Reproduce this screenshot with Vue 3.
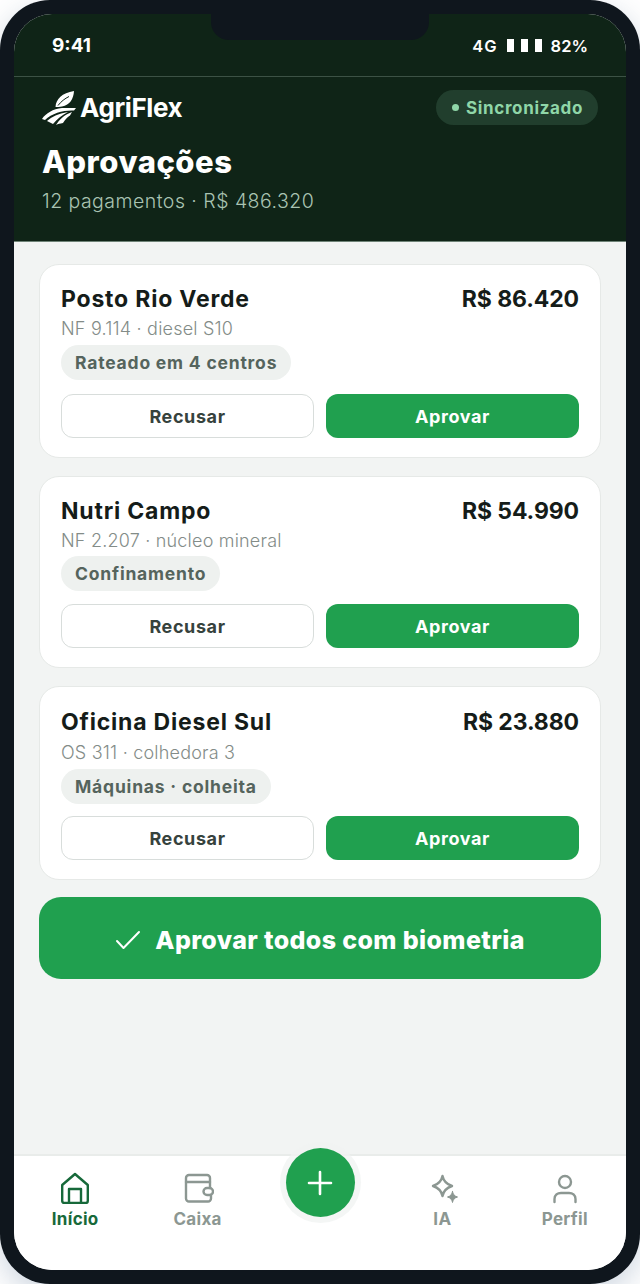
<template>
  <div class="page">
    <div class="phone">
      <div class="screen">
        <header class="head">
          <div class="status">
            <span class="time">9:41</span>
            <div class="status-right">
              <span class="net">4G</span>
              <span class="bars"><i></i><i></i><i></i></span>
              <span>82%</span>
            </div>
          </div>
          <div class="brand-row">
            <div class="brand">
              <svg class="logo" viewBox="0 0 34 36" fill="#fff">
                <path d="M13.500 17C14 9 20 3 32 1C31.500 9 28 15 20 16.500C17.500 17 15.500 17 13.500 17Z" />
                <path d="M16 15.500C19 11.500 23 8.500 27 6.500" fill="none" stroke="#0f2417" stroke-width="1" />
                <path d="M0 29C4 23 11 19 20 18H34L32 20.500C22 20 10 23 3 30Z" />
                <path d="M5 31C10 27 16 23.500 26 22C20 25 15 29 11 34C9 33 7 32 5 31Z" />
                <path d="M14 35C17 30 22 25 30 22L28 25.500C25 27 23 30 21 33C18 33.500 16 34 14 35Z" />
              </svg>
              <span class="brand-name">AgriFlex</span>
            </div>
            <div class="sync"><i></i>Sincronizado</div>
          </div>
          <h1>Aprovações</h1>
          <p class="summary">12 pagamentos · R$ 486.320</p>
        </header>

        <main class="content">
          <section v-for="item in items" :key="item.name" class="card">
            <div class="card-top">
              <h2>{{ item.name }}</h2>
              <span class="amount">{{ item.amount }}</span>
            </div>
            <p class="doc">{{ item.doc }}</p>
            <span class="tag">{{ item.tag }}</span>
            <div class="actions">
              <button class="btn refuse">Recusar</button>
              <button class="btn approve">Aprovar</button>
            </div>
          </section>

          <button class="approve-all">
            <svg width="26" height="26" viewBox="0 0 26 26" fill="none" stroke="#fff" stroke-width="2" stroke-linecap="round" stroke-linejoin="round">
              <path d="M2 14L8.500 21L24 5" />
            </svg>
            Aprovar todos com biometria
          </button>
        </main>

        <nav class="tabs">
          <div v-for="tab in tabs" :key="tab.label" class="tab" :class="{ active: tab.active }">
            <svg v-if="tab.icon" width="32" height="32" viewBox="0 0 32 32" fill="none" stroke="currentColor" stroke-width="2.400" stroke-linecap="round" stroke-linejoin="round" v-html="tab.icon"></svg>
            <span>{{ tab.label }}</span>
          </div>
          <button class="fab" aria-label="Novo">
            <svg width="30" height="30" viewBox="0 0 30 30" stroke="#fff" stroke-width="2.600" stroke-linecap="round">
              <path d="M15 4V26M4 15H26" />
            </svg>
          </button>
        </nav>
      </div>
      <div class="notch"></div>
    </div>
  </div>
</template>

<script setup>
const items = [
  { name: 'Posto Rio Verde', amount: 'R$ 86.420', doc: 'NF 9.114 · diesel S10', tag: 'Rateado em 4 centros' },
  { name: 'Nutri Campo', amount: 'R$ 54.990', doc: 'NF 2.207 · núcleo mineral', tag: 'Confinamento' },
  { name: 'Oficina Diesel Sul', amount: 'R$ 23.880', doc: 'OS 311 · colhedora 3', tag: 'Máquinas · colheita' }
]

const tabs = [
  { label: 'Início', active: true, icon: '<path d="M16 2L28.800 13V29A2 2 0 0 1 26.800 31H5.200A2 2 0 0 1 3.200 29V13Z"/><path d="M10 31V17H22V31"/>' },
  { label: 'Caixa', icon: '<path d="M28 16V6A3 3 0 0 0 25 3H7A3 3 0 0 0 4 6V26.500A3 3 0 0 0 7 29.500H26A3 3 0 0 0 29 26.500V23"/><path d="M4 10H28"/><rect x="21.500" y="16" width="9.500" height="7" rx="3.500"/>' },
  { label: '', icon: '' },
  { label: 'IA', icon: '<path d="M16.500 4C17.500 9 20 12 26 14C20 16 17.500 19 16.500 24C15.500 19 13 16 7 14C13 12 15.500 9 16.500 4Z"/><path d="M26.500 19.500C27 22 28 24 31.500 25C28 26 27 28 26.500 30.500C26 28 25 26 21.500 25C25 24 26 22 26.500 19.500Z" fill="currentColor" stroke-width="1"/>' },
  { label: 'Perfil', icon: '<circle cx="16" cy="10" r="6"/><path d="M5.500 30V27C5.500 23 8.500 21 12 21H20C23.500 21 26.500 23 26.500 27V30"/>' }
]
</script>

<style>
html, body {
  margin: 0;
  background: #fff;
}
</style>

<style scoped>
.page {
  width: 640px;
  height: 1284px;
  font-family: "Inter", "Noto Sans", sans-serif;
  overflow: hidden;
}

.phone {
  position: relative;
  box-sizing: border-box;
  width: 640px;
  height: 1284px;
  padding: 14px;
  background: #0f161d;
  border-radius: 50px;
  box-shadow: 0 10px 30px rgba(60, 90, 130, .25);
}

.notch {
  position: absolute;
  top: 0;
  left: 211px;
  width: 218px;
  height: 40px;
  background: #0f161d;
  border-radius: 0 0 18px 18px;
}

.screen {
  display: flex;
  flex-direction: column;
  height: 100%;
  background: #f2f4f3;
  border-radius: 38px;
  overflow: hidden;
}

.head {
  height: 228px;
  box-sizing: border-box;
  flex: none;
  background: #0f2417;
  border-bottom: 1px solid #6f8377;
  color: #fff;
}

.status {
  display: flex;
  justify-content: space-between;
  align-items: center;
  height: 63px;
  box-sizing: border-box;
  padding: 1px 38px 0;
  border-bottom: 1px solid #3c5245;
  font-weight: 600;
  font-size: 16.500px;
}

.time {
  font-size: 19px;
  font-weight: 700;
}

.status-right {
  display: flex;
  align-items: center;
  gap: 9px;
}

.net {
  letter-spacing: 1px;
}

.bars {
  display: flex;
  gap: 7px;
}

.bars i {
  width: 7px;
  height: 13px;
  background: #fff;
}

.brand-row {
  display: flex;
  justify-content: space-between;
  align-items: center;
  height: 36px;
  padding: 13px 28px 0;
}

.brand {
  display: flex;
  align-items: center;
  gap: 4px;
}

.logo {
  width: 34px;
  height: 36px;
}

.brand-name {
  padding-bottom: 2px;
  font-size: 26px;
  font-weight: 700;
  letter-spacing: -.4px;
}

.sync {
  display: flex;
  align-items: center;
  gap: 7px;
  height: 35px;
  margin-bottom: 1px;
  padding: 0 15px 0 16px;
  border-radius: 18px;
  background: #213e2d;
  color: #8fd6a8;
  font-size: 17px;
  font-weight: 700;
  letter-spacing: .65px;
}

.sync i {
  width: 7px;
  height: 7px;
  border-radius: 50%;
  background: #8fd6a8;
}

h1 {
  margin: 17px 28px 0;
  font-size: 31px;
  line-height: 38px;
  font-weight: 800;
  letter-spacing: .5px;
}

.summary {
  margin: 8px 28px 0;
  font-size: 19.500px;
  line-height: 24px;
  font-weight: 300;
  letter-spacing: .47px;
  color: #a9c3b2;
}

.content {
  flex: 1;
  display: flex;
  flex-direction: column;
  gap: 18px;
  padding: 22px 25px 0 25px;
}

.card {
  display: flex;
  flex-direction: column;
  align-items: flex-start;
  box-sizing: border-box;
  height: 194px;
  padding: 20px 21px 0;
  background: #fff;
  border: 1px solid #e6e9e7;
  border-radius: 20px;
}

.card:nth-of-type(2) {
  height: 192px;
}

.card:nth-of-type(2) .tag {
  margin-top: 4px;
}

.card:nth-of-type(2) .actions {
  margin-top: 13px;
}

.card:nth-of-type(3) {
  padding-top: 21px;
}

.card:nth-of-type(3) .doc {
  margin-top: 6px;
}

.card:nth-of-type(3) .actions {
  margin-top: 12px;
}

.card-top {
  display: flex;
  justify-content: space-between;
  align-items: center;
  width: 100%;
  color: #151c19;
}

h2 {
  margin: 0;
  font-size: 23px;
  line-height: 28px;
  font-weight: 700;
  letter-spacing: .8px;
}

.amount {
  font-size: 23px;
  font-weight: 700;
  letter-spacing: -.1px;
}

.doc {
  margin: 5px 0 0;
  font-size: 18px;
  line-height: 22px;
  font-weight: 300;
  letter-spacing: .2px;
  color: #838c88;
}

.tag {
  margin-top: 5px;
  height: 35px;
  line-height: 35px;
  padding: 0 14px;
  border-radius: 18px;
  background: #eef1ef;
  color: #55645d;
  font-size: 17.500px;
  font-weight: 700;
  letter-spacing: .8px;
}

.actions {
  display: grid;
  grid-template-columns: 1fr 1fr;
  gap: 12px;
  width: 100%;
  margin-top: 14px;
}

.btn {
  height: 44px;
  box-sizing: border-box;
  border-radius: 12px;
  font: 700 18px "Inter", sans-serif;
  letter-spacing: .6px;
}

.refuse {
  background: #fff;
  border: 1px solid #d8dddb;
  color: #36423d;
}

.approve {
  background: #20a04f;
  border: 0;
  color: #fff;
}

.approve-all {
  display: flex;
  align-items: center;
  justify-content: center;
  gap: 14px;
  height: 82px;
  margin-top: -1px;
  padding: 3px 0 0;
  border: 0;
  border-radius: 22px;
  background: #20a04f;
  color: #fff;
  font: 800 25px "Inter", sans-serif;
  letter-spacing: .37px;
}

.tabs {
  position: relative;
  display: grid;
  grid-template-columns: repeat(5, 1fr);
  flex: none;
  height: 116px;
  box-sizing: border-box;
  background: #fff;
  border-top: 2px solid #e9ecea;
}

.tab {
  display: flex;
  flex-direction: column;
  align-items: center;
  padding-top: 16px;
  gap: 5px;
  color: #8c9792;
  font-size: 17px;
  line-height: 20px;
  font-weight: 700;
  letter-spacing: .3px;
}

.tab.active {
  color: #17693a;
}

.fab {
  position: absolute;
  top: -8px;
  left: 50%;
  display: flex;
  align-items: center;
  justify-content: center;
  width: 69px;
  height: 69px;
  margin-left: -34.500px;
  padding: 0;
  border: 0;
  border-radius: 50%;
  background: #20a04f;
  box-shadow: 0 0 0 6px rgba(240, 243, 241, .75);
}
</style>
